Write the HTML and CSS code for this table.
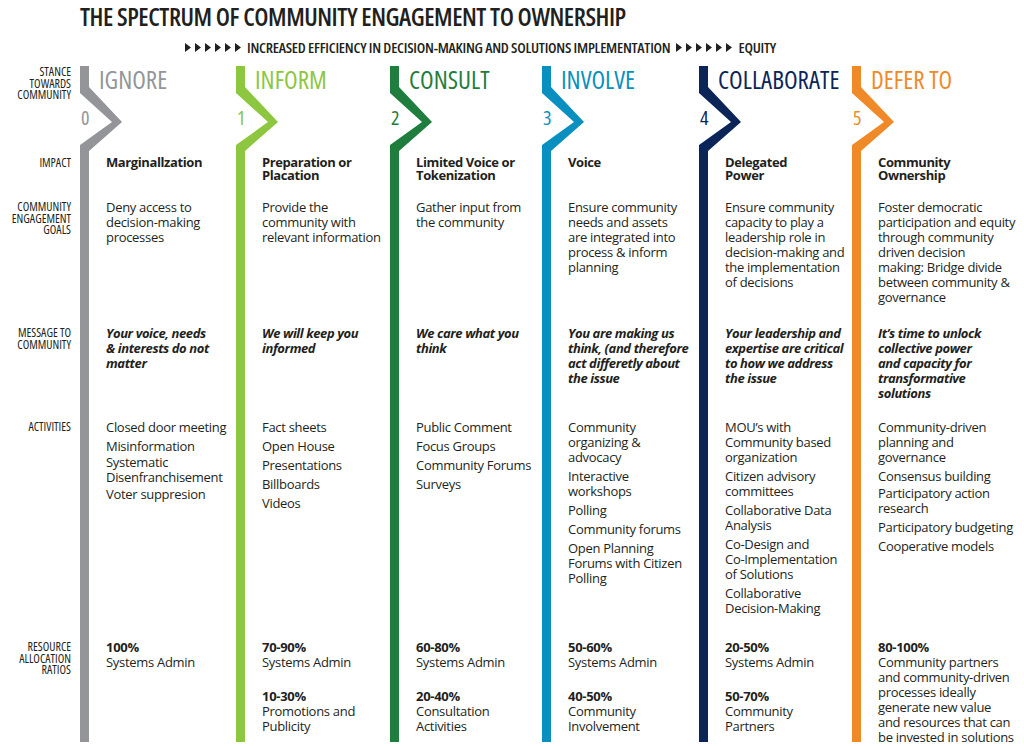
FILE: index.html
```html
<!DOCTYPE html>
<html lang="en">
<head>
<meta charset="utf-8">
<title>The Spectrum of Community Engagement to Ownership</title>
<link rel="stylesheet" href="styles.css">
</head>
<body>
<main class="sheet">
  <header class="masthead">
    <h1 class="title cond">THE SPECTRUM OF COMMUNITY ENGAGEMENT TO OWNERSHIP</h1>
    <p class="subtitle cond">
      <svg class="arrows" viewBox="0 0 56 9" aria-hidden="true"><polygon points="0,0 6,4.5 0,9"/><polygon points="10,0 16,4.5 10,9"/><polygon points="20,0 26,4.5 20,9"/><polygon points="30,0 36,4.5 30,9"/><polygon points="40,0 46,4.5 40,9"/><polygon points="50,0 56,4.5 50,9"/></svg>
      <span>INCREASED EFFICIENCY IN DECISION-MAKING AND SOLUTIONS IMPLEMENTATION</span>
      <svg class="arrows" viewBox="0 0 56 9" aria-hidden="true"><polygon points="0,0 6,4.5 0,9"/><polygon points="10,0 16,4.5 10,9"/><polygon points="20,0 26,4.5 20,9"/><polygon points="30,0 36,4.5 30,9"/><polygon points="40,0 46,4.5 40,9"/><polygon points="50,0 56,4.5 50,9"/></svg>
      <span>EQUITY</span>
    </p>
  </header>

  <section class="spectrum">
    <!-- header row -->
    <div class="label cond first">Stance<br>towards<br>community</div>
    <div class="head c0"><svg class="chev" viewBox="0 0 44 90" aria-hidden="true"><polygon points="0,0 9,0 9,21 42,56 9,85 9,90 0,90 0,79 32,56 0,27"/></svg><h2 class="stage cond">IGNORE</h2><span class="num cond">0</span></div>
    <div class="head c1"><svg class="chev" viewBox="0 0 44 90" aria-hidden="true"><polygon points="0,0 9,0 9,21 42,56 9,85 9,90 0,90 0,79 32,56 0,27"/></svg><h2 class="stage cond">INFORM</h2><span class="num cond">1</span></div>
    <div class="head c2"><svg class="chev" viewBox="0 0 44 90" aria-hidden="true"><polygon points="0,0 9,0 9,21 42,56 9,85 9,90 0,90 0,79 32,56 0,27"/></svg><h2 class="stage cond">CONSULT</h2><span class="num cond">2</span></div>
    <div class="head c3"><svg class="chev" viewBox="0 0 44 90" aria-hidden="true"><polygon points="0,0 9,0 9,21 42,56 9,85 9,90 0,90 0,79 32,56 0,27"/></svg><h2 class="stage cond">INVOLVE</h2><span class="num cond">3</span></div>
    <div class="head c4"><svg class="chev" viewBox="0 0 44 90" aria-hidden="true"><polygon points="0,0 9,0 9,21 42,56 9,85 9,90 0,90 0,79 32,56 0,27"/></svg><h2 class="stage cond">COLLABORATE</h2><span class="num cond">4</span></div>
    <div class="head c5"><svg class="chev" viewBox="0 0 44 90" aria-hidden="true"><polygon points="0,0 9,0 9,21 42,56 9,85 9,90 0,90 0,79 32,56 0,27"/></svg><h2 class="stage cond">DEFER TO</h2><span class="num cond">5</span></div>

    <!-- impact -->
    <div class="label cond">Impact</div>
    <div class="cell c0 impact">Marginallzation</div>
    <div class="cell c1 impact">Preparation or<br>Placation</div>
    <div class="cell c2 impact">Limited Voice or<br>Tokenization</div>
    <div class="cell c3 impact">Voice</div>
    <div class="cell c4 impact">Delegated<br>Power</div>
    <div class="cell c5 impact">Community<br>Ownership</div>

    <!-- goals -->
    <div class="label cond">Community<br>engagement<br>goals</div>
    <div class="cell c0">Deny access to<br>decision-making<br>processes</div>
    <div class="cell c1">Provide the<br>community with<br>relevant information</div>
    <div class="cell c2">Gather input from<br>the community</div>
    <div class="cell c3">Ensure community<br>needs and assets<br>are integrated into<br>process &amp; inform<br>planning</div>
    <div class="cell c4">Ensure community<br>capacity to play a<br>leadership role in<br>decision-making and<br>the implementation<br>of decisions</div>
    <div class="cell c5">Foster democratic<br>participation and equity<br>through community<br>driven decision<br>making: Bridge divide<br>between community &amp;<br>governance</div>

    <!-- message -->
    <div class="label cond">Message to<br>community</div>
    <div class="cell c0 message">Your voice, needs<br>&amp; interests do not<br>matter</div>
    <div class="cell c1 message">We will keep you<br>informed</div>
    <div class="cell c2 message">We care what you<br>think</div>
    <div class="cell c3 message">You are making us<br>think, (and therefore<br>act differetly about<br>the issue</div>
    <div class="cell c4 message">Your leadership and<br>expertise are critical<br>to how we address<br>the issue</div>
    <div class="cell c5 message">It’s time to unlock<br>collective power<br>and capacity for<br>transformative<br>solutions</div>

    <!-- activities -->
    <div class="label cond">Activities</div>
    <div class="cell c0"><ul class="acts"><li>Closed door meeting</li><li class="snug">Misinformation</li><li class="snug2">Systematic<br>Disenfranchisement</li><li>Voter suppresion</li></ul></div>
    <div class="cell c1"><ul class="acts"><li>Fact sheets</li><li>Open House</li><li>Presentations</li><li>Billboards</li><li>Videos</li></ul></div>
    <div class="cell c2"><ul class="acts"><li>Public Comment</li><li>Focus Groups</li><li>Community Forums</li><li>Surveys</li></ul></div>
    <div class="cell c3"><ul class="acts"><li>Community<br>organizing &amp;<br>advocacy</li><li>Interactive<br>workshops</li><li>Polling</li><li>Community forums</li><li>Open Planning<br>Forums with Citizen<br>Polling</li></ul></div>
    <div class="cell c4"><ul class="acts"><li>MOU’s with<br>Community based<br>organization</li><li>Citizen advisory<br>committees</li><li>Collaborative Data<br>Analysis</li><li>Co-Design and<br>Co-Implementation<br>of Solutions</li><li>Collaborative<br>Decision-Making</li></ul></div>
    <div class="cell c5"><ul class="acts"><li>Community-driven<br>planning and<br>governance</li><li class="snug2">Consensus building</li><li>Participatory action<br>research</li><li>Participatory budgeting</li><li>Cooperative models</li></ul></div>

    <!-- resources -->
    <div class="label cond">Resource<br>allocation<br>ratios</div>
    <div class="cell c0"><p class="ratio"><b>100%</b><br>Systems Admin</p></div>
    <div class="cell c1"><p class="ratio"><b>70-90%</b><br>Systems Admin</p><p class="ratio"><b>10-30%</b><br>Promotions and<br>Publicity</p></div>
    <div class="cell c2"><p class="ratio"><b>60-80%</b><br>Systems Admin</p><p class="ratio"><b>20-40%</b><br>Consultation<br>Activities</p></div>
    <div class="cell c3"><p class="ratio"><b>50-60%</b><br>Systems Admin</p><p class="ratio"><b>40-50%</b><br>Community<br>Involvement</p></div>
    <div class="cell c4"><p class="ratio"><b>20-50%</b><br>Systems Admin</p><p class="ratio"><b>50-70%</b><br>Community<br>Partners</p></div>
    <div class="cell c5"><p class="ratio"><b>80-100%</b><br>Community partners<br>and community-driven<br>processes ideally<br>generate new value<br>and resources that can<br>be invested in solutions</p></div>
  </section>
</main>
</body>
</html>
```

FILE: styles.css
```css
* { box-sizing: border-box; }

html, body {
  margin: 0;
  padding: 0;
  background: #ffffff;
}

body {
  width: 1024px;
  height: 746px;
  overflow: hidden;
  font-family: "Open Sans", "Liberation Sans", sans-serif;
  color: #231f20;
}

.cond {
  font-family: "Open Sans", "Liberation Sans Narrow", "Liberation Sans", sans-serif;
  font-stretch: 75%;
}

/* ---------- masthead ---------- */
.masthead {
  height: 66px;
}

.title {
  margin: 0;
  padding-left: 80px;
  font-size: 25px;
  line-height: 32px;
  font-weight: 600;
  letter-spacing: -0.45px;
  white-space: nowrap;
}

.subtitle {
  margin: 5px 0 0;
  padding-left: 185px;
  display: flex;
  align-items: center;
  gap: 6px;
  font-size: 15px;
  line-height: 20px;
  font-weight: 600;
  letter-spacing: -0.25px;
  white-space: nowrap;
}

.arrows {
  width: 56px;
  height: 9px;
  fill: #231f20;
  flex: none;
}

/* ---------- grid ---------- */
.spectrum {
  display: grid;
  grid-template-columns: 80px 156px 154px 152px 157px 153px 172px;
  grid-template-rows: 90px 44px 126px 94px 220px 102px;
}

.c0 { --c: #939598; }
.c1 { --c: #8dc63f; }
.c2 { --c: #1f7e3d; }
.c3 { --c: #0a90c0; }
.c4 { --c: #0c2558; }
.c5 { --c: #f08a28; }

.label {
  text-align: right;
  padding: 1px 9px 0 0;
  font-size: 12px;
  line-height: 11.5px;
  text-transform: uppercase;
  color: #231f20;
}

.label.first {
  padding-top: 0;
}

.head {
  display: grid;
}

.head > * {
  grid-area: 1 / 1;
  align-self: start;
  justify-self: start;
}

.chev {
  width: 44px;
  height: 90px;
  fill: var(--c);
}

.stage {
  margin: 0 0 0 19px;
  font-size: 25px;
  line-height: 26px;
  font-weight: 500;
  color: var(--c);
  white-space: nowrap;
}

.num {
  margin: 42px 0 0 1px;
  font-size: 20px;
  line-height: 20px;
  font-weight: 500;
  color: var(--c);
}

.cell {
  border-left: 9px solid var(--c);
  padding-left: 17px;
  font-size: 13px;
  line-height: 15px;
  letter-spacing: -0.3px;
  white-space: nowrap;
}

.impact {
  font-weight: 700;
  line-height: 13px;
  letter-spacing: -0.4px;
}

.message {
  font-weight: 700;
  font-style: italic;
  letter-spacing: -0.4px;
}

.acts {
  list-style: none;
  margin: 0;
  padding: 0;
}

.acts li {
  margin-bottom: 4px;
}

.acts li.snug {
  margin-bottom: 1px;
}

.acts li.snug2 {
  margin-bottom: 2px;
}

.ratio {
  margin: 0 0 19px;
}

.ratio b {
  font-weight: 700;
}
```
